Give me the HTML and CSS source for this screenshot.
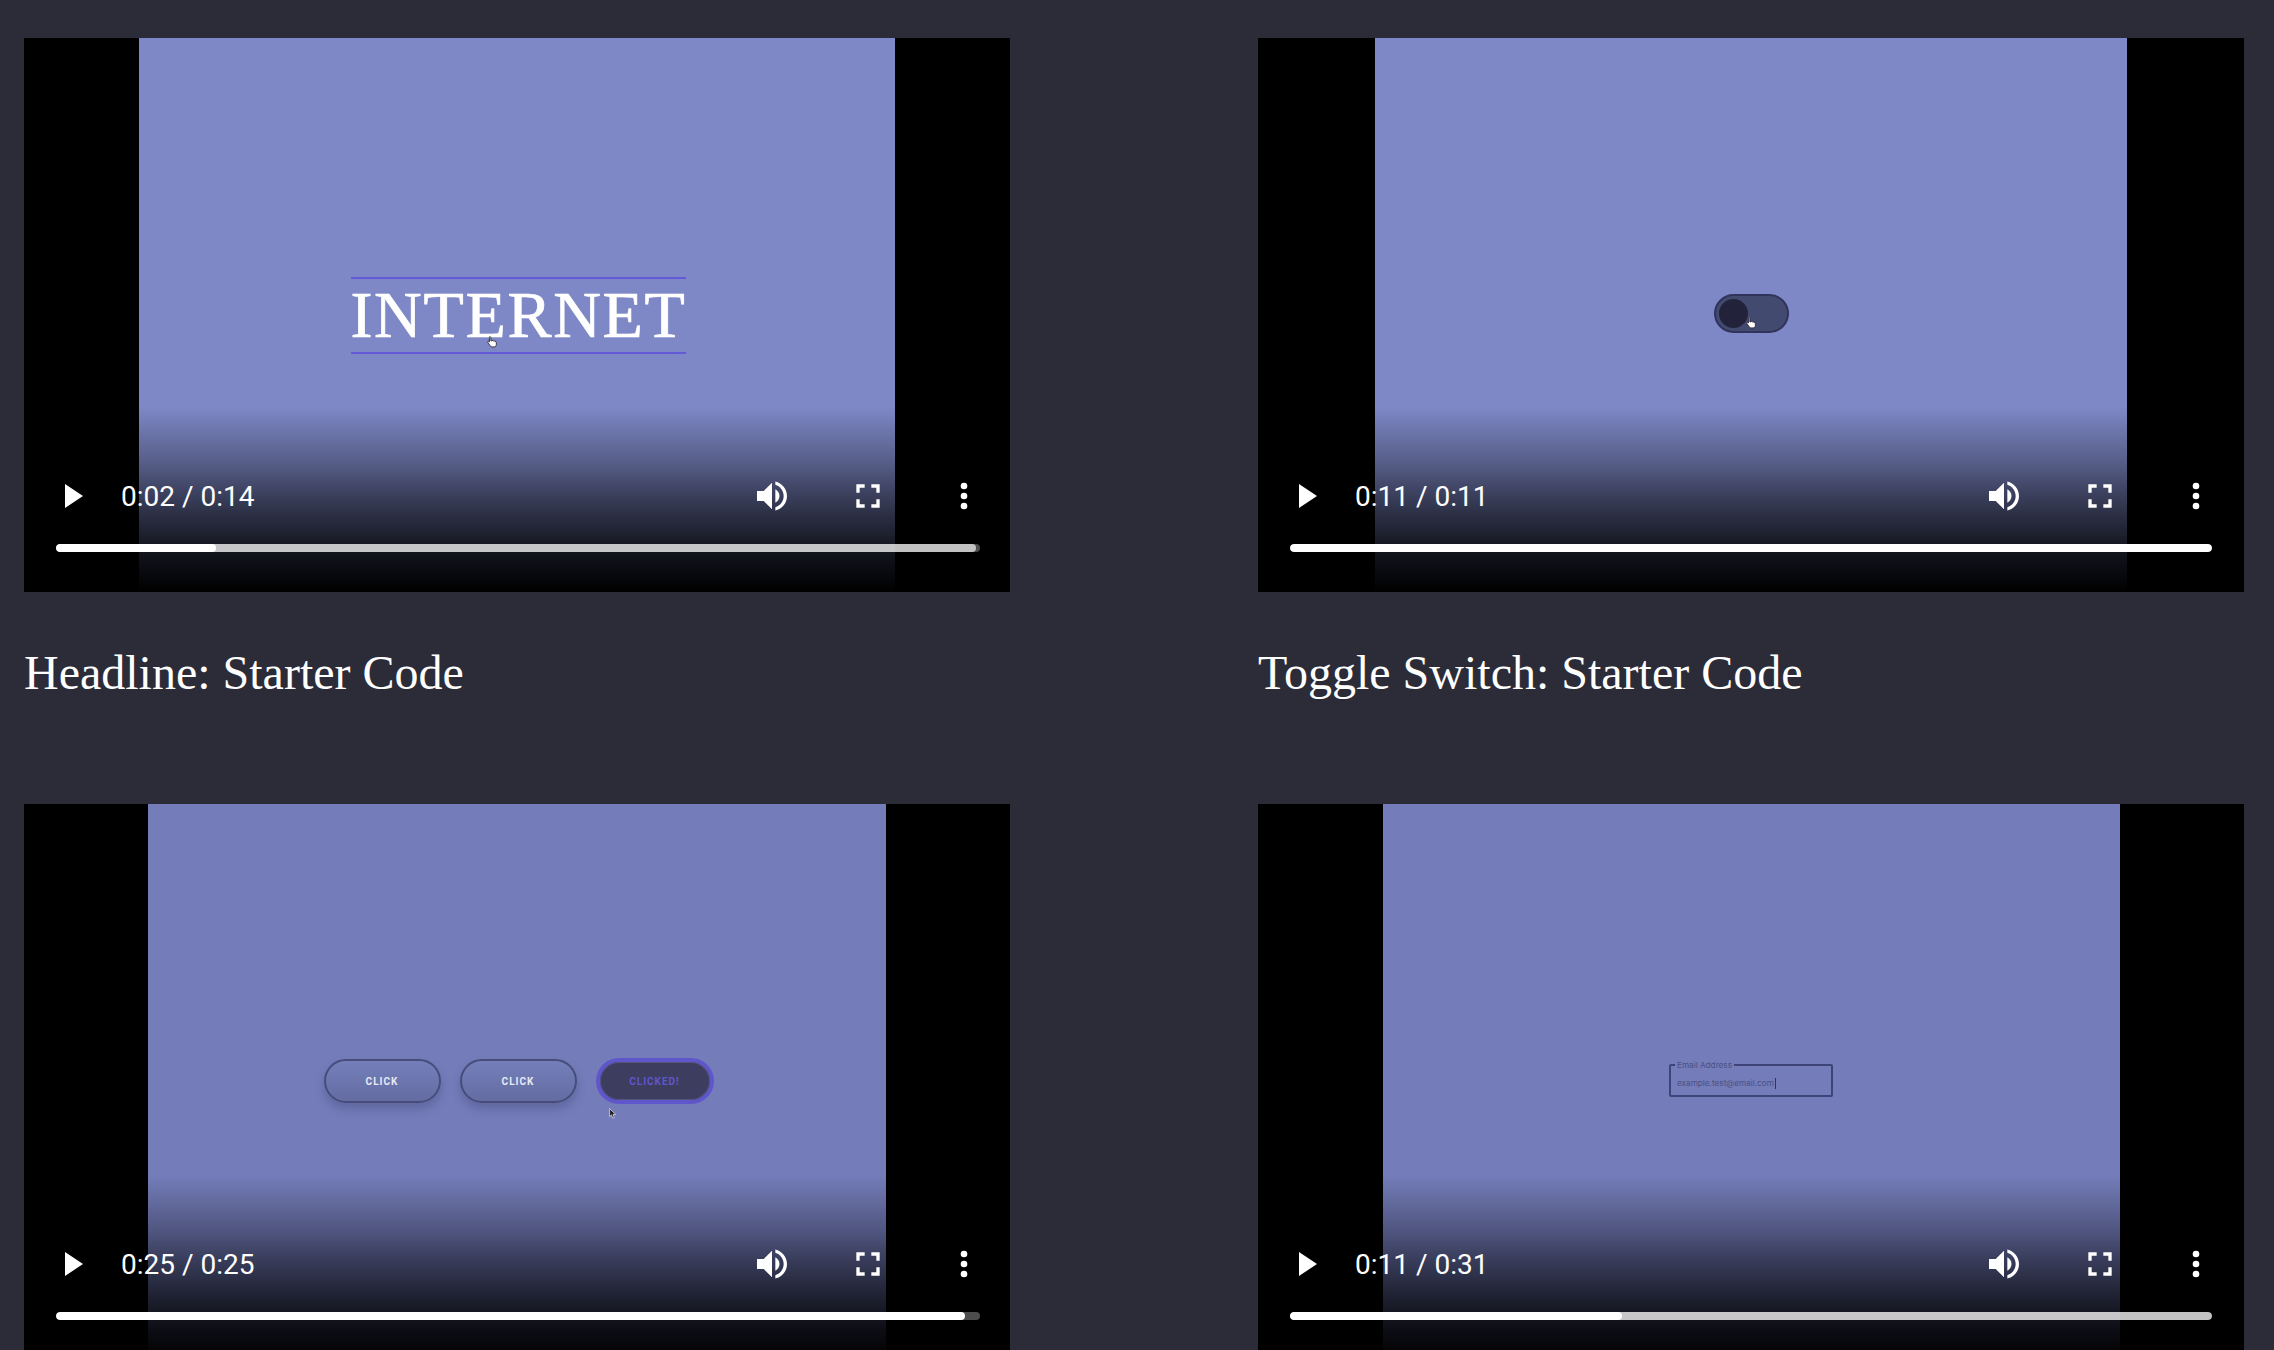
FILE: index.html
```html
<!DOCTYPE html>
<html lang="en">
<head>
    <meta charset="UTF-8">
    <meta name="viewport" content="width=device-width, initial-scale=1.0">
    <title>Starter Code Videos</title>
    <link rel="stylesheet" href="styles.css">
</head>
<body>
    <svg class="icon-defs" aria-hidden="true">
        <symbol id="icon-play" viewBox="0 0 18 24"><path d="M0 0l18 12L0 24z"/></symbol>
        <symbol id="icon-volume" viewBox="0 0 24 24"><path d="M3 9v6h4l5 5V4L7 9H3zm13.5 3c0-1.77-1.02-3.29-2.5-4.03v8.05c1.48-.73 2.5-2.25 2.5-4.02zM14 3.23v2.06c2.89.86 5 3.54 5 6.71s-2.11 5.85-5 6.71v2.06c4.01-.91 7-4.49 7-8.77s-2.99-7.86-7-8.77z"/></symbol>
        <symbol id="icon-fullscreen" viewBox="0 0 24 24"><path d="M7 14H5v5h5v-2H7v-3zm-2-4h2V7h3V5H5v5zm12 7h-3v2h5v-5h-2v3zM14 5v2h3v3h2V5h-5z"/></symbol>
        <symbol id="icon-more" viewBox="0 0 24 24"><circle cx="12" cy="6" r="2"/><circle cx="12" cy="12" r="2"/><circle cx="12" cy="18" r="2"/></symbol>
        <symbol id="cursor-hand" viewBox="0 0 10 11"><path d="M2.600.5c.5 0 .9.400.9.900v3l1 .1 .1-.4c.6-.2 1-.1 1.200.3l.2.200c.5-.2 1-.1 1.200.3 .7-.1 1.300.3 1.300 1v2c0 1.300-.8 2.100-2 2.100H4.600c-.8 0-1.300-.3-1.700-.9L.7 5.800c-.4-.6.300-1.300.9-.9l.6.500V1.400c0-.5-.1-.9.400-.9z" fill="#fff" stroke="#22222e" stroke-width=".8"/></symbol>
        <symbol id="cursor-arrow" viewBox="0 0 8 11"><path d="M.6.6v8l1.900-1.700 1.300 3.200 1.500-.6-1.300-3.100h2.600z" fill="#222" stroke="#fff" stroke-width=".6"/></symbol>
    </svg>

    <div class="video-grid">
        <div class="video-card">
            <div class="video">
                <div class="picture picture-headline">
                    <div class="headline">
                        <span class="headline-text">INTERNET</span>
                        <svg class="cursor cursor-on-headline"><use href="#cursor-hand"/></svg>
                    </div>
                </div>
                <div class="controls">
                    <div class="control-row">
                        <svg class="btn-play"><use href="#icon-play"/></svg>
                        <span class="time">0:02 / 0:14</span>
                        <span class="btn"><svg class="icon"><use href="#icon-volume"/></svg></span>
                        <span class="btn"><svg class="icon"><use href="#icon-fullscreen"/></svg></span>
                        <span class="btn"><svg class="icon"><use href="#icon-more"/></svg></span>
                    </div>
                    <div class="track">
                        <div class="buffered" style="width: 99.6%"></div>
                        <div class="played" style="width: 17.3%"></div>
                    </div>
                </div>
            </div>
            <h3 class="caption">Headline: Starter Code</h3>
        </div>

        <div class="video-card">
            <div class="video">
                <div class="picture picture-toggle">
                    <div class="toggle">
                        <span class="toggle-knob"></span>
                        <svg class="cursor cursor-on-toggle"><use href="#cursor-hand"/></svg>
                    </div>
                </div>
                <div class="controls">
                    <div class="control-row">
                        <svg class="btn-play"><use href="#icon-play"/></svg>
                        <span class="time">0:11 / 0:11</span>
                        <span class="btn"><svg class="icon"><use href="#icon-volume"/></svg></span>
                        <span class="btn"><svg class="icon"><use href="#icon-fullscreen"/></svg></span>
                        <span class="btn"><svg class="icon"><use href="#icon-more"/></svg></span>
                    </div>
                    <div class="track">
                        <div class="played" style="width: 100%"></div>
                    </div>
                </div>
            </div>
            <h3 class="caption">Toggle Switch: Starter Code</h3>
        </div>

        <div class="video-card">
            <div class="video">
                <div class="picture picture-buttons">
                    <div class="button-row">
                        <span class="demo-btn">CLICK</span>
                        <span class="demo-btn">CLICK</span>
                        <span class="demo-btn demo-btn-clicked">CLICKED!</span>
                        <svg class="cursor cursor-on-buttons"><use href="#cursor-arrow"/></svg>
                    </div>
                </div>
                <div class="controls">
                    <div class="control-row">
                        <svg class="btn-play"><use href="#icon-play"/></svg>
                        <span class="time">0:25 / 0:25</span>
                        <span class="btn"><svg class="icon"><use href="#icon-volume"/></svg></span>
                        <span class="btn"><svg class="icon"><use href="#icon-fullscreen"/></svg></span>
                        <span class="btn"><svg class="icon"><use href="#icon-more"/></svg></span>
                    </div>
                    <div class="track">
                        <div class="played" style="width: 98.4%"></div>
                    </div>
                </div>
            </div>
        </div>

        <div class="video-card">
            <div class="video">
                <div class="picture picture-input">
                    <fieldset class="email-field">
                        <legend>Email Address</legend>
                        <span class="email-value">example.test@email.com</span>
                    </fieldset>
                </div>
                <div class="controls">
                    <div class="control-row">
                        <svg class="btn-play"><use href="#icon-play"/></svg>
                        <span class="time">0:11 / 0:31</span>
                        <span class="btn"><svg class="icon"><use href="#icon-volume"/></svg></span>
                        <span class="btn"><svg class="icon"><use href="#icon-fullscreen"/></svg></span>
                        <span class="btn"><svg class="icon"><use href="#icon-more"/></svg></span>
                    </div>
                    <div class="track">
                        <div class="buffered" style="width: 100%"></div>
                        <div class="played" style="width: 36%"></div>
                    </div>
                </div>
            </div>
        </div>
    </div>
</body>
</html>
```

FILE: styles.css
```css
html,
body {
    height: 100%;
    overflow: hidden;
}
body {
    margin: 0;
    padding: 38px 0 0 24px;
    box-sizing: border-box;
    background-color: #2c2c39;
    font-family: "Liberation Serif", serif;
}
.icon-defs {
    display: none;
}
.video-grid {
    display: grid;
    grid-template-columns: repeat(2, 986px);
    column-gap: 248px;
    row-gap: 104px;
}
.video {
    position: relative;
    height: 554px;
    display: flex;
    justify-content: center;
    background-color: #000;
}
.video-card:nth-child(n+3) .video {
    height: 556px;
}
.picture {
    height: 100%;
    display: flex;
    align-items: center;
    justify-content: center;
}
.picture-headline {
    width: 756px;
    background-color: #7e88c6;
}
.picture-toggle {
    width: 752px;
    background-color: #7e88c6;
}
.picture-buttons {
    width: 738px;
    background-color: #747dba;
}
.picture-input {
    width: 737px;
    background-color: #747dba;
}

/* player controls */
.controls {
    position: absolute;
    left: 0;
    right: 0;
    bottom: 0;
    height: 185px;
    padding-bottom: 40px;
    box-sizing: border-box;
    display: flex;
    flex-direction: column;
    justify-content: flex-end;
    background: linear-gradient(to bottom,
        rgba(0, 0, 0, 0) 0%,
        rgba(0, 0, 0, 0.3) 29%,
        rgba(0, 0, 0, 0.54) 48%,
        rgba(0, 0, 0, 0.8) 72%,
        rgba(0, 0, 0, 0.88) 82%,
        rgba(0, 0, 0, 1) 100%);
}
.video-card:nth-child(even) .controls {
    right: 2px;
}
.control-row {
    display: flex;
    align-items: center;
    height: 64px;
    margin-bottom: 16px;
    padding: 0 14px 0 41px;
    fill: #fff;
}
.btn-play {
    width: 18px;
    height: 24px;
    flex-shrink: 0;
}
.time {
    margin-left: 38px;
    margin-right: auto;
    color: #fff;
    font-family: Roboto, sans-serif;
    font-size: 28px;
}
.btn {
    width: 64px;
    height: 64px;
    margin-left: 32px;
    display: flex;
    align-items: center;
    justify-content: center;
}
.icon {
    width: 40px;
    height: 40px;
}
.track {
    position: relative;
    height: 8px;
    margin: 0 30px 0 32px;
    border-radius: 4px;
    overflow: hidden;
    background-color: rgba(255, 255, 255, 0.3);
}
.buffered,
.played {
    position: absolute;
    left: 0;
    top: 0;
    bottom: 0;
    border-radius: 4px;
}
.buffered {
    background-color: rgba(255, 255, 255, 0.66);
}
.played {
    background-color: #fff;
}

/* video contents */
.headline {
    position: relative;
    width: 335px;
    height: 77px;
    box-sizing: border-box;
    margin-left: 3px;
    display: flex;
    align-items: center;
    justify-content: center;
    border-top: 2px solid #6459d8;
    border-bottom: 2px solid #6459d8;
}
.headline-text {
    color: #fff;
    font-size: 66px;
    letter-spacing: 1.7px;
    -webkit-text-stroke: 0.7px #fff;
    white-space: nowrap;
}
.toggle {
    position: relative;
    width: 75px;
    height: 39px;
    margin-bottom: 3px;
    padding-left: 5px;
    box-sizing: border-box;
    display: flex;
    align-items: center;
    border: 2px solid #30345c;
    border-radius: 20px;
    background-color: #434a70;
}
.toggle-knob {
    width: 29px;
    height: 29px;
    margin-left: -2px;
    border-radius: 50%;
    background-color: #22233a;
}
.button-row {
    position: relative;
    display: flex;
    align-items: center;
    gap: 19px;
    margin-left: 3px;
    margin-top: -2px;
}
.demo-btn {
    width: 117px;
    height: 44px;
    box-sizing: border-box;
    display: flex;
    align-items: center;
    justify-content: center;
    border: 2px solid #474c7a;
    border-radius: 22px;
    background: linear-gradient(to bottom, #747fba, #646ca2);
    box-shadow: 0 6px 10px rgba(50, 54, 100, 0.3);
    color: #e8e8f4;
    font-family: Roboto, sans-serif;
    font-size: 10px;
    font-weight: 700;
    letter-spacing: 1px;
}
.demo-btn-clicked {
    width: 118px;
    height: 46px;
    border: 4px solid #6056cc;
    border-radius: 23px;
    background: #3d3d60;
    box-shadow: inset 0 0 0 1px #55557c;
    color: #6056cc;
}
.email-field {
    width: 164px;
    height: 37px;
    box-sizing: border-box;
    margin: -8px 0 0;
    padding: 0 0 0 6px;
    border: 2px solid #3f4478;
    border-radius: 2px;
    font-family: Inter, sans-serif;
    color: #4a5082;
}
.email-field legend {
    padding: 0 2px;
    margin-left: -2px;
    font-size: 8.2px;
    line-height: 10px;
}
.email-value {
    display: inline-block;
    font-size: 8.2px;
    line-height: 11px;
    padding-right: 1px;
    border-right: 1px solid #30345c;
}

/* mouse pointers caught in the recordings */
.cursor {
    position: absolute;
    width: 11px;
    height: 12px;
}
.cursor-on-headline {
    left: 136px;
    top: 57px;
}
.cursor-on-toggle {
    left: 30px;
    top: 21px;
}
.cursor-on-buttons {
    left: 285px;
    top: 50px;
    width: 8px;
    height: 11px;
}

.caption {
    margin: 53px 0 0;
    color: #fff;
    font-size: 48px;
    font-weight: 400;
}
```
